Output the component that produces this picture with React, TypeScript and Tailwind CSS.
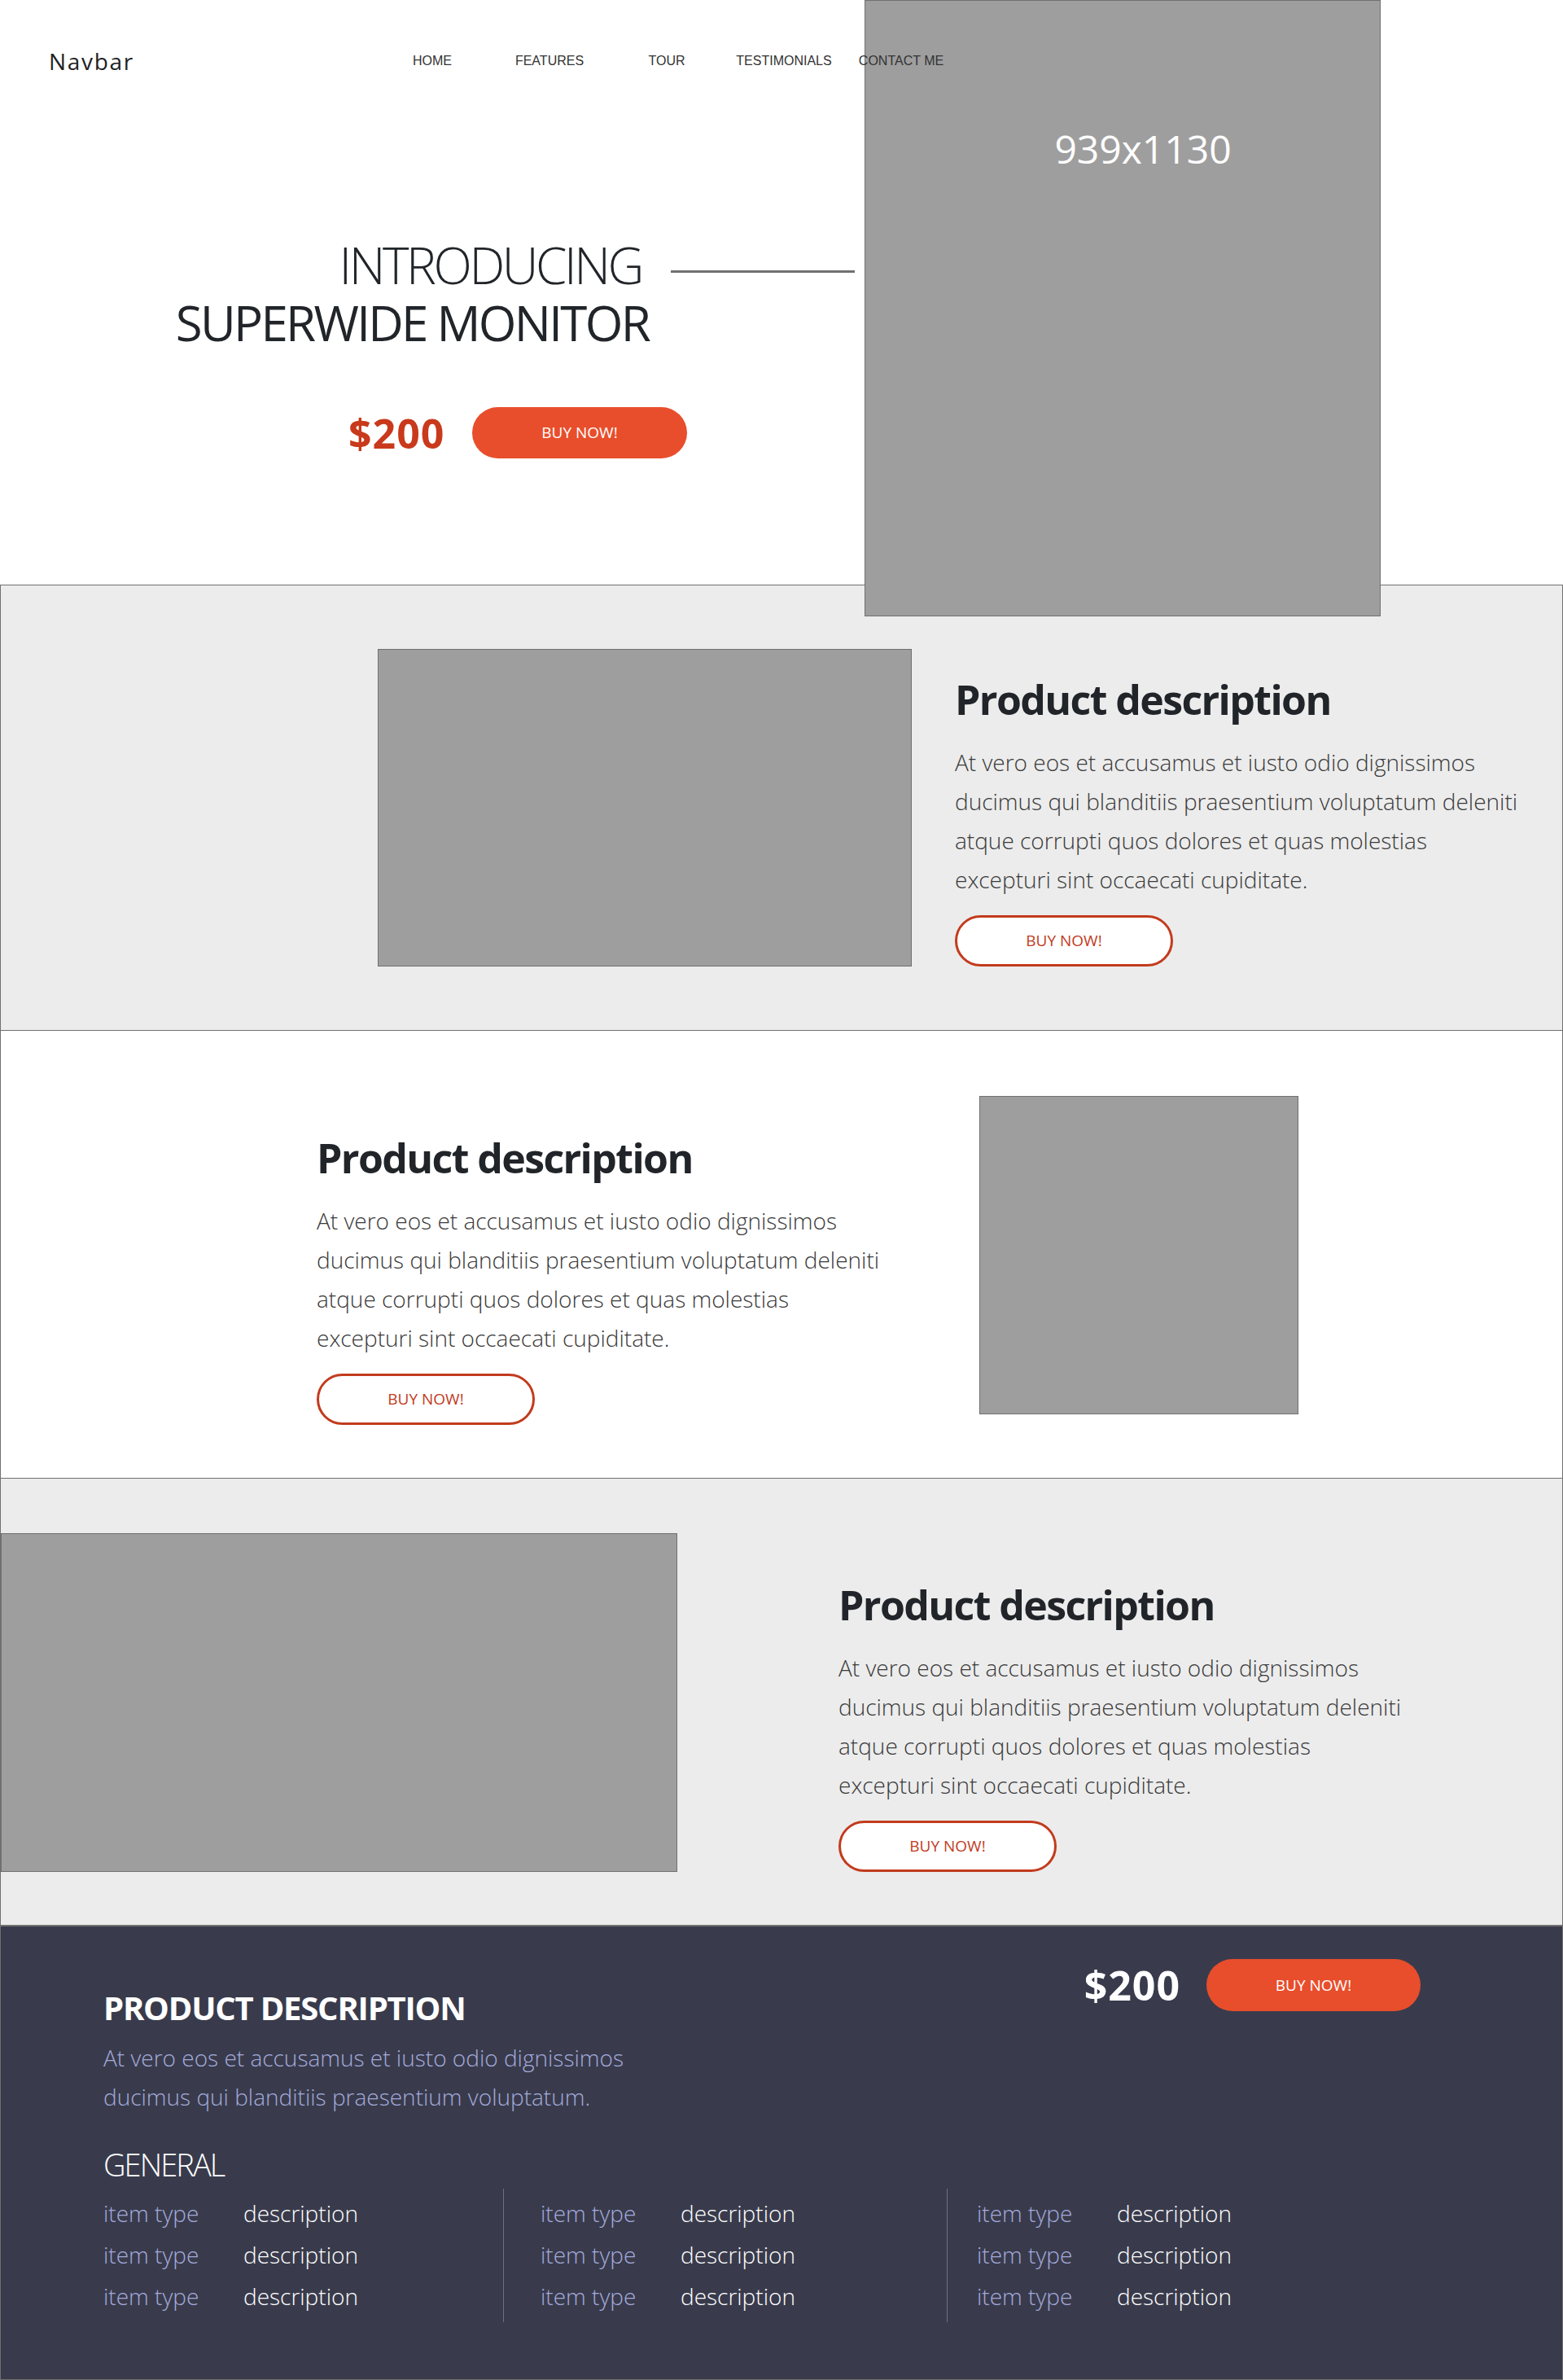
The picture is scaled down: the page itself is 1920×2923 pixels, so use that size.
const NAV = ["HOME", "FEATURES", "TOUR", "TESTIMONIALS", "CONTACT ME"];

function Placeholder({ className }: { className: string }) {
  return <div className={`shrink-0 bg-[#9e9e9e] border border-[#707070] ${className}`} />;
}

function Desc({ className = "" }: { className?: string }) {
  return (
    <div className={`flex flex-col items-start ${className}`}>
      <h2 className="text-[50px] font-bold leading-none tracking-[-1.6px] text-[#212529] whitespace-nowrap">
        Product description
      </h2>
      <p className="mt-[28px] text-[28px] font-light leading-[48px] text-[#3a3a3a] whitespace-nowrap">
        At vero eos et accusamus et iusto odio dignissimos
        <br />
        ducimus qui blanditiis praesentium voluptatum deleniti
        <br />
        atque corrupti quos dolores et quas molestias
        <br />
        excepturi sint occaecati cupiditate.
      </p>
      <button className="mt-[20px] w-[268px] h-[63px] rounded-full border-[3px] border-[#c23b1d] bg-white text-[19px] text-[#c23b1d] leading-none">
        BUY NOW!
      </button>
    </div>
  );
}

function SpecCol({ className = "" }: { className?: string }) {
  return (
    <div className={`pt-[5px] pb-[6px] ${className}`}>
      {[0, 1, 2].map((i) => (
        <div key={i} className="flex h-[51px] items-center text-[28px] font-light leading-[51px] whitespace-nowrap">
          <span className="w-[172px] text-[#a4aadb]">item type</span>
          <span className="text-white">description</span>
        </div>
      ))}
    </div>
  );
}

export default function App() {
  return (
    <div className="w-[1920px] bg-white font-['Open_Sans',sans-serif]">
      {/* HERO */}
      <header className="h-[718px] flex items-start">
        <div className="w-[1062px] shrink-0 flex flex-col">
          <nav className="relative z-20 h-[150px] flex items-center">
            <div className="w-[459px] shrink-0 pl-[60px] text-[28px] leading-none tracking-[0.06em] text-[#222]">
              Navbar
            </div>
            <ul className="flex shrink-0 font-['Liberation_Sans',Arial,sans-serif] text-[16px] leading-none text-[#333]">
              {NAV.map((n) => (
                <li key={n} className="w-[144px] shrink-0 text-center whitespace-nowrap">
                  {n}
                </li>
              ))}
            </ul>
          </nav>
          <div className="mt-[144px] flex items-start">
            <div className="w-[797px] shrink-0 pr-[9px] text-right text-[62px] font-light leading-none tracking-[-0.055em] text-[#212529]">
              INTRODUCING
            </div>
            <div className="ml-[27px] mt-[38px] w-[226px] h-[3px] bg-[#707070]" />
          </div>
          <div className="mt-[10px] w-[797px] text-right text-[60px] leading-none tracking-[-0.045em] text-[#212529] whitespace-nowrap">
            SUPERWIDE MONITOR
          </div>
          <div className="mt-[74px] flex items-center pl-[428px]">
            <span className="w-[152px] shrink-0 text-[50px] font-bold leading-none tracking-[0.02em] text-[#c9391b]">$200</span>
            <button className="w-[264px] h-[63px] rounded-full bg-[#e84e2c] text-[19px] leading-none text-white">
              BUY NOW!
            </button>
          </div>
        </div>
        <div className="relative z-10 w-[634px] h-[757px] shrink-0 bg-[#9e9e9e] border border-[#707070]">
          <div className="pt-[158px] pl-[50px] text-center text-[48px] leading-none text-white">939x1130</div>
        </div>
      </header>

      {/* SECTION 1 */}
      <section className="h-[548px] border border-[#707070] bg-[#ececec] pt-[78px] pl-[463px]">
        <div className="flex items-end">
          <Placeholder className="w-[656px] h-[390px]" />
          <Desc className="ml-[53px]" />
        </div>
      </section>

      {/* SECTION 2 */}
      <section className="h-[549px] border-x border-[#707070] bg-white pt-[80px] pl-[388px]">
        <div className="flex items-start">
          <Desc className="w-[814px] shrink-0 pt-[51px]" />
          <Placeholder className="w-[392px] h-[391px]" />
        </div>
      </section>

      {/* SECTION 3 */}
      <section className="h-[550px] border border-[#707070] bg-[#ececec] pt-[67px]">
        <div className="flex items-end">
          <Placeholder className="w-[831px] h-[416px]" />
          <Desc className="ml-[198px]" />
        </div>
      </section>

      {/* FOOTER */}
      <footer className="h-[558px] border border-[#707070] bg-[#393b4c] pt-[40px] pl-[126px] pr-[174px]">
        <div className="flex items-start justify-between">
          <div className="pt-[40px]">
            <h2 className="text-[40px] font-bold leading-none tracking-[-1.2px] text-white whitespace-nowrap">
              PRODUCT DESCRIPTION
            </h2>
            <p className="mt-[17px] text-[28px] font-light leading-[48px] text-[#a4aadb] whitespace-nowrap">
              At vero eos et accusamus et iusto odio dignissimos
              <br />
              ducimus qui blanditiis praesentium voluptatum.
            </p>
          </div>
          <div className="flex items-center gap-[32px]">
            <span className="text-[50px] font-bold leading-none tracking-[0.02em] text-white">$200</span>
            <button className="w-[263px] h-[64px] rounded-full bg-[#e84e2c] text-[19px] leading-none text-white">
              BUY NOW!
            </button>
          </div>
        </div>
        <h3 className="mt-[40px] text-[38px] font-light leading-none tracking-[-1.9px] text-white">GENERAL</h3>
        <div className="mt-[11px] flex">
          <SpecCol className="w-[491px] shrink-0" />
          <SpecCol className="w-[545px] shrink-0 border-l border-[#6e7080] pl-[45px]" />
          <SpecCol className="shrink-0 border-l border-[#6e7080] pl-[36px]" />
        </div>
      </footer>
    </div>
  );
}
